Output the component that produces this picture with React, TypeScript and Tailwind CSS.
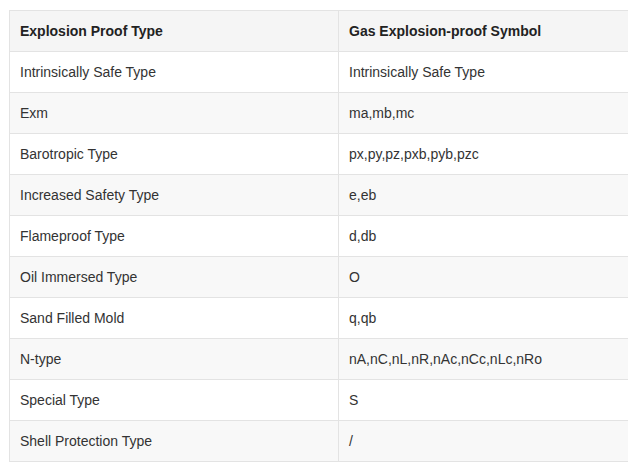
import React from "react";

const rows: [string, string][] = [
  ["Intrinsically Safe Type", "Intrinsically Safe Type"],
  ["Exm", "ma,mb,mc"],
  ["Barotropic Type", "px,py,pz,pxb,pyb,pzc"],
  ["Increased Safety Type", "e,eb"],
  ["Flameproof Type", "d,db"],
  ["Oil Immersed Type", "O"],
  ["Sand Filled Mold", "q,qb"],
  ["N-type", "nA,nC,nL,nR,nAc,nCc,nLc,nRo"],
  ["Special Type", "S"],
  ["Shell Protection Type", "/"],
];

export default function App() {
  return (
    <div className="w-[628px] h-[471px] bg-white overflow-hidden pl-[9px] pt-[10px]" style={{ fontFamily: '"Liberation Sans", Arial, sans-serif' }}>
      <div className="w-[640px] border-l border-t border-[#e3e3e3] text-[14px] text-[#333]">
        <div className="flex h-[41px] border-b border-[#e3e3e3] bg-[#f5f5f5] font-bold text-[#222]">
          <div className="w-[328px] flex items-center pl-[10px]">Explosion Proof Type</div>
          <div className="flex-1 flex items-center pl-[10px] border-l border-[#e3e3e3]">Gas Explosion-proof Symbol</div>
        </div>
        {rows.map(([a, b], i) => (
          <div key={i} className={`flex h-[41px] border-b border-[#e3e3e3] ${i % 2 === 1 ? "bg-[#f8f8f8]" : "bg-white"}`}>
            <div className="w-[328px] flex items-center pl-[10px]">{a}</div>
            <div className="flex-1 flex items-center pl-[10px] border-l border-[#e3e3e3]">{b}</div>
          </div>
        ))}
      </div>
    </div>
  );
}
